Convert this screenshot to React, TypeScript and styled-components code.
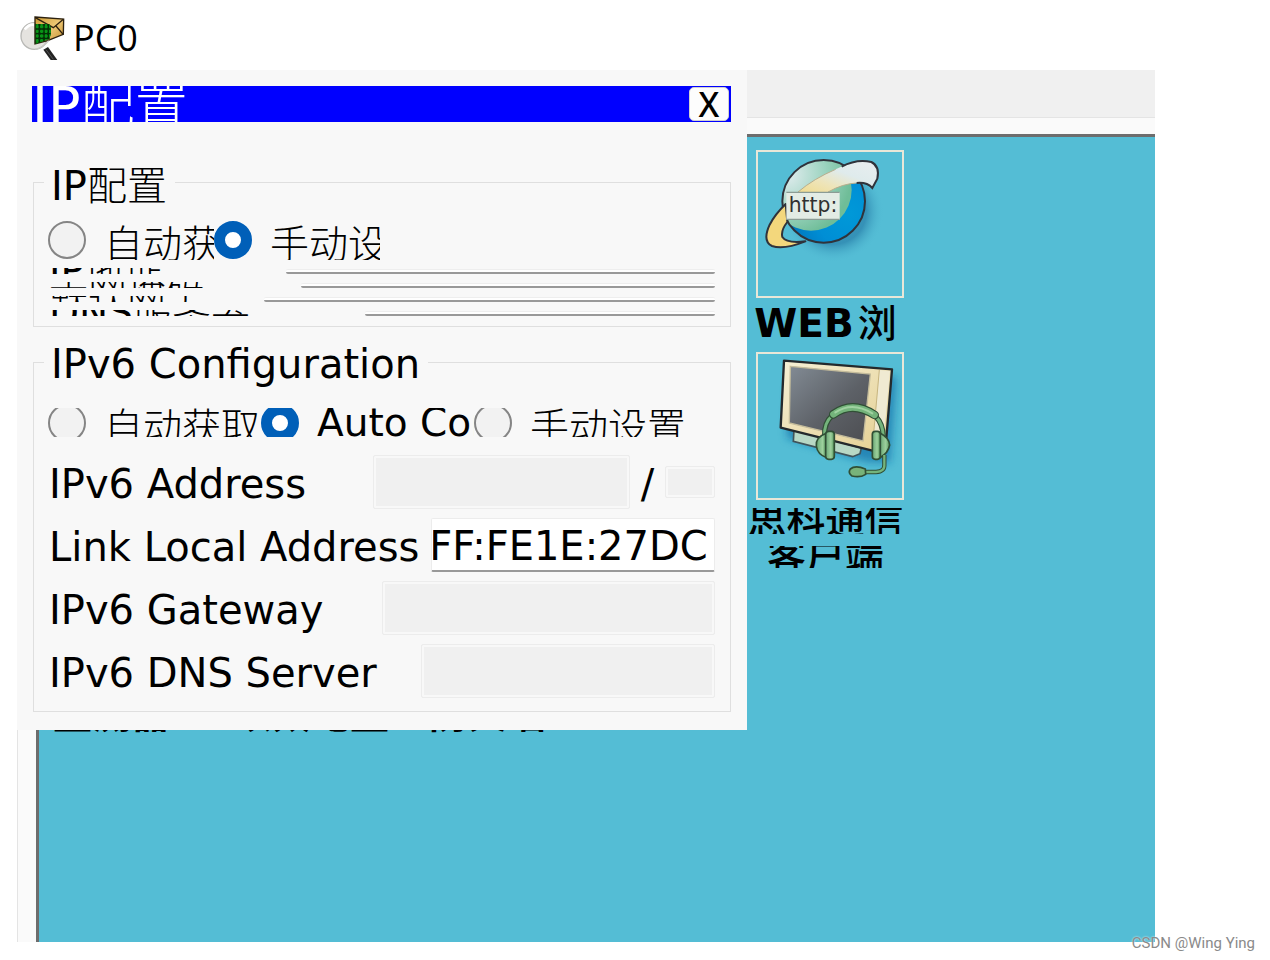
import React, { useEffect, useRef } from 'react';
import styled, { createGlobalStyle } from 'styled-components';

const GlobalStyle = createGlobalStyle`
  *, *::before, *::after { box-sizing: border-box; }
  body {
    margin: 0;
    background: #ffffff;
    color: #000000;
    font-family: "DejaVu Sans", "Noto Sans CJK SC", sans-serif;
  }
`;

const Page = styled.main`
  position: relative;
  display: flex;
  flex-direction: column;
  min-height: 100vh;
  padding: 0 115px 18px 17px;
`;

const WindowHeader = styled.header`
  display: flex;
  align-items: center;
  gap: 8px;
  height: 70px;
  padding: 5px 0 0 3px;
`;

const AppIcon = styled.svg`
  width: 45px;
  height: 45px;
`;

const WindowTitle = styled.h1`
  margin: 0;
  font: 400 36px/44px "Open Sans", "Noto Sans", sans-serif;
`;

const Stage = styled.div`
  flex: 1;
  display: grid;
  grid-template-columns: minmax(0, 730fr) minmax(0, 408fr);
  grid-template-rows: 1fr;
`;

const Backdrop = styled.div`
  grid-area: 1 / 1 / 2 / 3;
  display: flex;
  flex-direction: column;
  background: #fafafa;
  border-left: 1px solid #e4e4e4;
`;

const TabStrip = styled.div`
  height: 48px;
  background: #f0f0f0;
  border-bottom: 1px solid #e4e4e4;
`;

const DesktopSurface = styled.div`
  flex: 1;
  margin: 16px 0 0 18px;
  background: #54bdd5;
  border-top: 3px solid #6d6d6d;
  border-left: 3px solid #6d6d6d;
`;

const DialogColumn = styled.div`
  grid-area: 1 / 1;
  z-index: 1;
`;

const Dialog = styled.section`
  padding: 16px 16px 18px 16px;
  background: #f8f8f8;
`;

const Han = styled.span`
  font-family: "Noto Sans CJK SC", sans-serif;
  font-weight: 300;
`;

const TitleBar = styled.div`
  display: flex;
  align-items: center;
  justify-content: space-between;
  height: 36px;
  overflow: hidden;
  background: #0000ff;
  color: #ffffff;
  margin-left: -1px;
`;

const DialogTitle = styled.h2`
  margin: 0;
  font-size: 54px;
  font-weight: 400;
  line-height: 52px;
`;

const CloseButton = styled.button`
  width: 40px;
  height: 34px;
  margin-right: 2px;
  padding: 0;
  border: 1px solid #d0d0d0;
  border-radius: 5px;
  background: #fdfdfd;
  color: #000000;
  font: 500 34px/30px "Noto Sans", "Open Sans", sans-serif;
`;

const Group = styled.fieldset<{ $first?: boolean }>`
  min-width: 0;
  margin: ${(p) => (p.$first ? '37px' : '13px')} 0 0;
  padding: ${(p) => (p.$first ? '14px 15px 10px' : '24px 15px 13px')};
  border: 1px solid #dfdfdf;
`;

const GroupTitle = styled.legend`
  margin-left: -5px;
  padding: 4px 8px 0 7px;
  font-size: 40px;
  line-height: 40px;
`;

const RadioRow = styled.div<{ $height: number }>`
  display: flex;
  align-items: center;
  height: ${(p) => p.$height}px;
  margin-left: -1px;
  overflow: hidden;
`;

const RadioOption = styled.label<{ $width: number }>`
  flex: 0 1 ${(p) => p.$width}px;
  display: flex;
  align-items: center;
  gap: 18px;
  min-width: 0;
  overflow: hidden;
  white-space: nowrap;
  font-size: 39px;
  line-height: 42px;
`;

const RadioHan = styled(Han)`
  padding-top: 2px;
`;

const Radio = styled.input`
  appearance: none;
  flex: none;
  width: 38px;
  height: 38px;
  margin: 0;
  border: 2px solid #858585;
  border-radius: 50%;
  background: #f2f2f2;
  &:checked {
    border: 11px solid #005fb8;
    background: #ffffff;
  }
`;

const StripRow = styled.div`
  display: flex;
  align-items: center;
  justify-content: space-between;
  height: 6px;
`;

const StripList = styled.div`
  display: flex;
  flex-direction: column;
  gap: 8px;
  padding-top: 8px;
`;

const StripLabel = styled.label`
  display: flex;
  align-items: center;
  height: 6px;
  overflow: hidden;
  white-space: nowrap;
  font-size: 39px;
  line-height: 40px;
`;

const StripInput = styled.input<{ $width: number }>`
  width: ${(p) => p.$width}px;
  height: 5px;
  padding: 0;
  border: 0;
  border-top: 1px solid #eeeeee;
  border-bottom: 2px solid #999999;
  border-radius: 2px;
  background: #ffffff;
`;

const FieldList = styled.div`
  display: flex;
  flex-direction: column;
  gap: 9px;
  padding-top: 18px;
`;

const FieldRow = styled.div`
  display: flex;
  align-items: center;
  height: 54px;
`;

const FieldLabel = styled.label<{ $width: number }>`
  flex: 0 0 ${(p) => p.$width}px;
  padding-top: 3px;
  white-space: nowrap;
  font-size: 40px;
  line-height: 48px;
`;

const TextField = styled.input<{ $small?: boolean }>`
  flex: ${(p) => (p.$small ? '0 0 50px' : '1 1 0')};
  width: 0;
  min-width: 0;
  height: ${(p) => (p.$small ? '32px' : '54px')};
  padding: 3px 6px 0 1px;
  border: 1px solid #ececec;
  border-bottom: 2px solid #999999;
  border-radius: 2px;
  background: #ffffff;
  color: #000000;
  font: 400 40px "DejaVu Sans", sans-serif;
  &:disabled {
    border: 1px solid #ececec;
    background: #f0f0f0;
    box-shadow: inset 0 0 0 2px #f8f8f8;
  }
`;

const Slash = styled.span`
  flex: 0 0 35px;
  padding-top: 3px;
  text-align: center;
  font-size: 40px;
  line-height: 48px;
`;

const CoveredLabels = styled.div`
  display: flex;
  align-items: flex-end;
  height: 3px;
  padding-left: 36px;
  overflow: hidden;
`;

const CoveredLabel = styled.span<{ $width: number }>`
  flex: 0 0 ${(p) => p.$width}px;
  white-space: nowrap;
  font-size: 39px;
  font-weight: 700;
  line-height: 48px;
  margin-bottom: -6px;
`;

const Shortcuts = styled.nav`
  grid-area: 1 / 2;
  z-index: 1;
  display: flex;
  flex-direction: column;
  gap: 9px;
  width: 157px;
  padding-top: 80px;
`;

const Shortcut = styled.a`
  display: flex;
  flex-direction: column;
  align-items: center;
  color: #000000;
  text-decoration: none;
  font-size: 39px;
  font-weight: 700;
`;

const ShortcutHan = styled.span`
  font-weight: 500;
`;

const Tile = styled.svg`
  align-self: flex-end;
  width: 148px;
  height: 148px;
  border: 2px solid #e9e7d8;
`;

const ShortcutLine = styled.span<{ $height: number; $gap: number }>`
  display: flex;
  align-items: center;
  gap: 4px;
  height: ${(p) => p.$height}px;
  margin-top: ${(p) => p.$gap}px;
  overflow: hidden;
  white-space: nowrap;
  line-height: 44px;
`;

const Watermark = styled.small`
  position: absolute;
  right: 15px;
  bottom: 7px;
  color: #8a8a8a;
  font: 400 15px/20px Roboto, sans-serif;
  text-shadow: 0 0 2px #ffffff;
`;

function PacketIcon() {
  return (
    <AppIcon viewBox="60 45 135 135" aria-hidden="true">
      <defs>
        <linearGradient id="envelope" x1="0" y1="0" x2="1" y2="1">
          <stop offset="0" stopColor="#c99a32" />
          <stop offset="0.5" stopColor="#edc774" />
          <stop offset="1" stopColor="#c28c2c" />
        </linearGradient>
        <clipPath id="mesh"><path d="M106 72 L148 72 Q158 92 148 117 L106 132Z" /></clipPath>
      </defs>
      <circle cx="103" cy="108" r="40" fill="#e5e3df" stroke="#b8b8b5" strokeWidth="4" />
      <path d="M74 88 Q91 68 107 76" fill="none" stroke="#ffffff" strokeWidth="8" />
      <path d="M105 51 L191 57 L190 103 L143 122 L105 132Z" fill="url(#envelope)" stroke="#2d210f" strokeWidth="4" />
      <path d="M106 53 L160 83 L190 58 M150 80 L122 112 M168 78 L190 104" fill="none" stroke="#2d210f" strokeWidth="4" />
      <g clipPath="url(#mesh)">
        <path d="M105 70h55v65h-55z" fill="#064409" />
        <path d="M112 70v62 M125 70v62 M138 70v62 M150 70v62 M104 80h54 M104 94h54 M104 108h54 M104 122h54" stroke="#089417" strokeWidth="6" />
        <path d="M118 70v62 M132 70v62 M145 70v62 M104 87h54 M104 101h54 M104 115h54" stroke="#032f06" strokeWidth="4" />
      </g>
      <path d="M106 71V131" stroke="#16320b" strokeWidth="3" />
      <path d="M106 148 Q131 142 146 122" fill="none" stroke="#c9c9c5" strokeWidth="4" />
      <path d="M130 149 L144 141 L172 180 L152 180Z" fill="#222222" />
      <path d="M138 149 L160 178" stroke="#555555" strokeWidth="3" />
    </AppIcon>
  );
}

function BrowserIcon() {
  return (
    <Tile viewBox="54 274 432 432" aria-hidden="true">
      <defs>
        <radialGradient id="ocean" cx="0.8" cy="0.65" r="0.8">
          <stop offset="0" stopColor="#0099d8" />
          <stop offset="0.5" stopColor="#008ed5" />
          <stop offset="1" stopColor="#0072b8" />
        </radialGradient>
        <radialGradient id="land" cx="0.2" cy="0.3" r="0.8">
          <stop offset="0" stopColor="#e3edf0" />
          <stop offset="0.6" stopColor="#9bd3bf" />
          <stop offset="1" stopColor="#6fbd98" />
        </radialGradient>
        <linearGradient id="ribbon" x1="0" y1="1" x2="1" y2="0">
          <stop offset="0" stopColor="#f0dc90" />
          <stop offset="0.3" stopColor="#eee4b8" />
          <stop offset="0.6" stopColor="#dfebec" />
          <stop offset="1" stopColor="#e9eef0" />
        </linearGradient>
        <radialGradient id="globeShade">
          <stop offset="0.65" stopColor="#287faa" stopOpacity="0.7" />
          <stop offset="1" stopColor="#54bdd5" stopOpacity="0" />
        </radialGradient>
        <clipPath id="globeClip"><circle cx="251" cy="422" r="124" /></clipPath>
      </defs>
      <circle cx="280" cy="452" r="152" fill="url(#globeShade)" />
      <circle cx="251" cy="422" r="124" fill="url(#ocean)" />
      <circle cx="213" cy="388" r="122" fill="url(#land)" clipPath="url(#globeClip)" />
      <circle cx="251" cy="422" r="124" fill="none" stroke="#30333b" strokeWidth="6" />
      <path d="M137 430 Q105 461 89 492 Q66 542 96 556 Q131 568 196 542 Q140 549 127 529 Q122 509 142 484Z" fill="#f3d77c" stroke="#30333b" strokeWidth="6" strokeLinejoin="round" />
      <path d="M174 394 Q221 354 287 326 Q350 294 394 304 Q420 317 412 354 L397 382 Q381 364 350 367 Q308 369 264 394Z" fill="url(#ribbon)" />
      <path d="M174 394 Q221 354 287 326 M264 394 Q308 369 350 367" fill="none" stroke="#b7ad8d" strokeWidth="3" />
      <path d="M305 318 Q350 294 394 304 Q420 317 412 354 L397 382 Q381 364 350 367" fill="none" stroke="#30333b" strokeWidth="6" />
      <path d="M139 394h160v83H139z" fill="#e3ece5" />
      <path d="M139 395h160 M139 476h160" stroke="#8b9c95" strokeWidth="4" />
      <text x="146" y="454" fontFamily="DejaVu Sans" fontSize="61" fontWeight="400" fill="#303030">http:</text>
    </Tile>
  );
}

function CommunicatorIcon() {
  return (
    <Tile viewBox="54 39 432 432" aria-hidden="true">
      <defs>
        <linearGradient id="screen" x1="0" y1="0" x2="1" y2="1">
          <stop offset="0" stopColor="#828b94" />
          <stop offset="0.55" stopColor="#5d6167" />
          <stop offset="1" stopColor="#4c4d51" />
        </linearGradient>
        <linearGradient id="casing" x1="0" y1="0" x2="1" y2="1">
          <stop offset="0" stopColor="#f6f0d6" />
          <stop offset="1" stopColor="#e4cf91" />
        </linearGradient>
        <linearGradient id="cup" x1="0" y1="0" x2="1" y2="0">
          <stop offset="0" stopColor="#69a775" />
          <stop offset="0.6" stopColor="#9dd09d" />
          <stop offset="1" stopColor="#519357" />
        </linearGradient>
        <filter id="shade" x="-30%" y="-30%" width="160%" height="160%"><feGaussianBlur stdDeviation="13" /></filter>
      </defs>
      <path d="M150 85 L470 107 L450 365 L380 363 L140 290Z" fill="#1674ac" opacity="0.75" filter="url(#shade)" />
      <path d="M162 267 L364 321 L360 338 L338 347 L160 301Z" fill="#b8d8c5" stroke="#40545a" strokeWidth="5" />
      <path d="M132 59 L456 85 L439 291 L397 329 L122 260Z" fill="url(#casing)" stroke="#24292c" strokeWidth="7" strokeLinejoin="round" />
      <path d="M418 87 L450 90 L432 282 L398 319Z" fill="#f0ead2" />
      <path d="M418 87 L397 321" stroke="#c7b580" strokeWidth="3" />
      <path d="M151 76 L391 99 L369 300 L148 246Z" fill="url(#screen)" stroke="#c4bc9b" strokeWidth="4" />
      <path d="M254 285 Q251 246 278 222 M407 226 Q429 248 430 288" fill="none" stroke="#304f35" strokeWidth="16" />
      <path d="M254 285 Q251 246 278 222 M407 226 Q429 248 430 288" fill="none" stroke="#74b47c" strokeWidth="9" />
      <path d="M280 220 Q337 178 404 222" fill="none" stroke="#304f35" strokeWidth="26" strokeLinecap="round" />
      <path d="M280 220 Q337 178 404 222" fill="none" stroke="#74b47b" strokeWidth="19" strokeLinecap="round" />
      <path d="M286 214 Q337 180 397 217" fill="none" stroke="#a0d2a1" strokeWidth="6" strokeLinecap="round" />
      <path d="M259 277 Q226 289 229 315 Q232 340 260 350Z" fill="url(#cup)" stroke="#304f35" strokeWidth="5" />
      <rect x="257" y="271" width="26" height="84" rx="9" fill="url(#cup)" stroke="#304f35" strokeWidth="5" />
      <path d="M420 276 Q448 291 449 312 Q445 336 420 350Z" fill="url(#cup)" stroke="#304f35" strokeWidth="5" />
      <rect x="397" y="271" width="24" height="84" rx="9" fill="url(#cup)" stroke="#304f35" strokeWidth="5" />
      <path d="M433 342 V370 Q435 392 408 393 H372" fill="none" stroke="#304f35" strokeWidth="13" />
      <path d="M433 342 V370 Q435 392 408 393 H372" fill="none" stroke="#74b47c" strokeWidth="7" />
      <path d="M376 384 Q346 371 331 384 Q323 396 336 405 Q360 411 377 400Z" fill="#78b37a" stroke="#304f35" strokeWidth="5" />
    </Tile>
  );
}

const ipv4Fields = [
  { id: 'ip', latin: 'IP', han: '地址', width: 429 },
  { id: 'mask', latin: '', han: '子网掩码', width: 414 },
  { id: 'gateway', latin: '', han: '默认网关', width: 451 },
  { id: 'dns', latin: 'DNS', han: '服务器', width: 350 },
];

export default function App() {
  const linkLocal = useRef<HTMLInputElement>(null);

  // Keep the end of the long address in view.
  useEffect(() => {
    if (linkLocal.current) linkLocal.current.scrollLeft = linkLocal.current.scrollWidth;
  }, []);

  return (
    <>
      <GlobalStyle />
      <Page>
        <WindowHeader>
          <PacketIcon />
          <WindowTitle>PC0</WindowTitle>
        </WindowHeader>
        <Stage>
          <Backdrop>
            <TabStrip />
            <DesktopSurface />
          </Backdrop>
          <DialogColumn>
            <Dialog>
              <TitleBar>
                <DialogTitle>IP<Han>配置</Han></DialogTitle>
                <CloseButton type="button">X</CloseButton>
              </TitleBar>
              <Group $first>
                <GroupTitle>IP<Han>配置</Han></GroupTitle>
                <RadioRow $height={40}>
                  <RadioOption $width={166}><Radio type="radio" name="ipv4" /><RadioHan>自动获取</RadioHan></RadioOption>
                  <RadioOption $width={166}><Radio type="radio" name="ipv4" defaultChecked /><RadioHan>手动设置</RadioHan></RadioOption>
                </RadioRow>
                <StripList>
                  {ipv4Fields.map((f) => (
                    <StripRow key={f.id}>
                      <StripLabel htmlFor={f.id}>{f.latin}<Han>{f.han}</Han></StripLabel>
                      <StripInput id={f.id} $width={f.width} />
                    </StripRow>
                  ))}
                </StripList>
              </Group>
              <Group>
                <GroupTitle>IPv6 Configuration</GroupTitle>
                <RadioRow $height={29}>
                  <RadioOption $width={213}><Radio type="radio" name="ipv6" /><RadioHan>自动获取</RadioHan></RadioOption>
                  <RadioOption $width={213}><Radio type="radio" name="ipv6" defaultChecked />Auto Config</RadioOption>
                  <RadioOption $width={213}><Radio type="radio" name="ipv6" /><RadioHan>手动设置</RadioHan></RadioOption>
                </RadioRow>
                <FieldList>
                  <FieldRow>
                    <FieldLabel htmlFor="v6-address" $width={324}>IPv6 Address</FieldLabel>
                    <TextField id="v6-address" disabled />
                    <Slash>/</Slash>
                    <TextField $small aria-label="Prefix length" disabled />
                  </FieldRow>
                  <FieldRow>
                    <FieldLabel htmlFor="v6-link" $width={382}>Link Local Address</FieldLabel>
                    <TextField id="v6-link" ref={linkLocal} defaultValue="FE80::2E0:F7FF:FE1E:27DC" />
                  </FieldRow>
                  <FieldRow>
                    <FieldLabel htmlFor="v6-gateway" $width={333}>IPv6 Gateway</FieldLabel>
                    <TextField id="v6-gateway" disabled />
                  </FieldRow>
                  <FieldRow>
                    <FieldLabel htmlFor="v6-dns" $width={372}>IPv6 DNS Server</FieldLabel>
                    <TextField id="v6-dns" disabled />
                  </FieldRow>
                </FieldList>
              </Group>
            </Dialog>
            <CoveredLabels>
              <CoveredLabel $width={180}>量测器</CoveredLabel>
              <CoveredLabel $width={196}>以太电量</CoveredLabel>
              <CoveredLabel $width={120}>防火墙</CoveredLabel>
            </CoveredLabels>
          </DialogColumn>
          <Shortcuts>
            <Shortcut href="#web">
              <BrowserIcon />
              <ShortcutLine $height={38} $gap={7}>WEB<ShortcutHan>浏</ShortcutHan></ShortcutLine>
            </Shortcut>
            <Shortcut href="#communicator">
              <CommunicatorIcon />
              <ShortcutLine $height={26} $gap={8}><ShortcutHan>思科通信</ShortcutHan></ShortcutLine>
              <ShortcutLine $height={22} $gap={12}><ShortcutHan>客户端</ShortcutHan></ShortcutLine>
            </Shortcut>
          </Shortcuts>
        </Stage>
        <Watermark>CSDN @Wing Ying</Watermark>
      </Page>
    </>
  );
}
